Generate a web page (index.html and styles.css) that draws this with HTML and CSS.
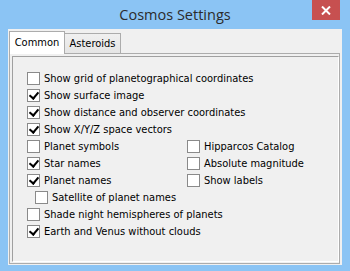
FILE: index.html
```html
<!DOCTYPE html>
<html lang="en">

<head>
    <meta charset="UTF-8">
    <title>Cosmos Settings</title>
    <link rel="stylesheet" href="styles.css">
</head>

<body>
    <div class="window">
        <div class="titlebar">
            <span class="title">Cosmos Settings</span>
            <div class="close">
                <svg width="10" height="9" viewBox="0 0 10 9">
                    <path d="M1 0.5 L9 8.5 M9 0.5 L1 8.5" stroke="#fff" stroke-width="2" fill="none" />
                </svg>
            </div>
        </div>
        <div class="client">
            <div class="tabs">
                <div class="tab active">Common</div>
                <div class="tab">Asteroids</div>
            </div>
            <div class="panel">
                <div class="frame">
                    <div class="row"><span class="box"></span>Show grid of planetographical coordinates</div>
                    <div class="row"><span class="box checked"></span>Show surface image</div>
                    <div class="row"><span class="box checked"></span>Show distance and observer coordinates</div>
                    <div class="row"><span class="box checked"></span>Show X/Y/Z space vectors</div>
                    <div class="pair">
                        <div class="row"><span class="box"></span>Planet symbols</div>
                        <div class="row"><span class="box"></span>Hipparcos Catalog</div>
                    </div>
                    <div class="pair">
                        <div class="row"><span class="box checked"></span>Star names</div>
                        <div class="row"><span class="box"></span>Absolute magnitude</div>
                    </div>
                    <div class="pair">
                        <div class="row"><span class="box checked"></span>Planet names</div>
                        <div class="row"><span class="box"></span>Show labels</div>
                    </div>
                    <div class="row sub"><span class="box"></span>Satellite of planet names</div>
                    <div class="row"><span class="box"></span>Shade night hemispheres of planets</div>
                    <div class="row"><span class="box checked"></span>Earth and Venus without clouds</div>
                </div>
            </div>
        </div>
    </div>
</body>

</html>
```

FILE: styles.css
```css
* {
    margin: 0;
    padding: 0;
    box-sizing: border-box;
}

body {
    background: #8bc4f4;
    font-family: 'DejaVu Sans Condensed', 'Liberation Sans', sans-serif;
    font-size: 11px;
    color: #000;
}

.window {
    width: 350px;
    height: 271px;
}

.titlebar {
    position: relative;
    height: 29px;
    text-align: center;
}

.title {
    display: block;
    padding-top: 4px;
    font-family: 'Open Sans', sans-serif;
    font-size: 14.5px;
    line-height: 22px;
    color: #2b2b2b;
}

.close {
    position: absolute;
    top: 0;
    right: 10px;
    width: 28px;
    height: 20px;
    background: #c75050;
    display: flex;
    align-items: center;
    justify-content: center;
}

.client {
    margin: 0 8px;
    height: 236px;
    background: #f0f0f0;
    padding: 2px 2px 0 1px;
}

.tabs {
    display: flex;
    align-items: flex-end;
    height: 22px;
    position: relative;
    z-index: 1;
}

.tab {
    width: 57px;
    height: 20px;
    margin-left: -1px;
    line-height: 19px;
    text-align: center;
    border: 1px solid #acacac;
    border-bottom: none;
    background: linear-gradient(#f0f0f0, #e5e5e5);
}

.tab.active {
    width: 56px;
    height: 23px;
    margin-left: 0;
    margin-bottom: -1px;
    line-height: 21px;
    background: #fff;
    position: relative;
    z-index: 2;
}

.panel {
    height: 211px;
    border: 1px solid #acacac;
    padding: 2px 0 0 2px;
}

.frame {
    height: 206px;
    border: 1px solid;
    border-color: #a0a0a0 #fff #fff #a0a0a0;
    padding: 13px 0 0 14px;
}

.row {
    display: flex;
    align-items: center;
    height: 17px;
    white-space: nowrap;
}

.pair {
    display: flex;
}

.pair .row:first-child {
    width: 160px;
}

.sub {
    padding-left: 8px;
}

.box {
    width: 13px;
    height: 13px;
    border: 1px solid #8a8a8a;
    background: #fff;
    margin-right: 4px;
    flex-shrink: 0;
    position: relative;
}

.box.checked::after {
    content: '';
    position: absolute;
    left: 3px;
    top: 0px;
    width: 4px;
    height: 7px;
    border: solid #000;
    border-width: 0 2px 2px 0;
    transform: rotate(40deg);
}
```
